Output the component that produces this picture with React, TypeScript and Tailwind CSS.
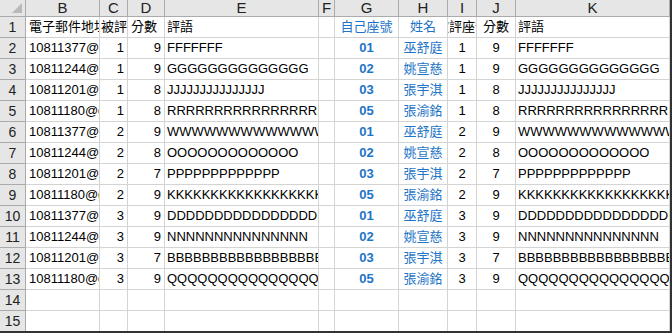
import React from "react";

const COLS = ["B", "C", "D", "E", "F", "G", "H", "I", "J", "K"];

const rows = [
  ["10811377@gmail.com", "1", "9", "FFFFFFF", "01", "巫舒庭", "1", "9", "FFFFFFF"],
  ["10811244@gmail.com", "1", "9", "GGGGGGGGGGGGGG", "02", "姚宣慈", "1", "9", "GGGGGGGGGGGGGG"],
  ["10811201@gmail.com", "1", "8", "JJJJJJJJJJJJJJJ", "03", "張宇淇", "1", "8", "JJJJJJJJJJJJJJJ"],
  ["10811180@gmail.com", "1", "8", "RRRRRRRRRRRRRRRRRRRRRR", "05", "張渝銘", "1", "8", "RRRRRRRRRRRRRRRRRRRRRR"],
  ["10811377@gmail.com", "2", "9", "WWWWWWWWWWWWWWWWWW", "01", "巫舒庭", "2", "9", "WWWWWWWWWWWWWWWWWW"],
  ["10811244@gmail.com", "2", "8", "OOOOOOOOOOOOO", "02", "姚宣慈", "2", "8", "OOOOOOOOOOOOO"],
  ["10811201@gmail.com", "2", "7", "PPPPPPPPPPPPP", "03", "張宇淇", "2", "7", "PPPPPPPPPPPPP"],
  ["10811180@gmail.com", "2", "9", "KKKKKKKKKKKKKKKKKKKK", "05", "張渝銘", "2", "9", "KKKKKKKKKKKKKKKKKKKK"],
  ["10811377@gmail.com", "3", "9", "DDDDDDDDDDDDDDDDDDD", "01", "巫舒庭", "3", "9", "DDDDDDDDDDDDDDDDDDD"],
  ["10811244@gmail.com", "3", "9", "NNNNNNNNNNNNNNN", "02", "姚宣慈", "3", "9", "NNNNNNNNNNNNNNN"],
  ["10811201@gmail.com", "3", "7", "BBBBBBBBBBBBBBBBBBBB", "03", "張宇淇", "3", "7", "BBBBBBBBBBBBBBBBBBBB"],
  ["10811180@gmail.com", "3", "9", "QQQQQQQQQQQQQQQQQQQ", "05", "張渝銘", "3", "9", "QQQQQQQQQQQQQQQQQQQ"],
];

// spreadsheet cell; text colour comes from the sheet or a blue override
const cell = "h-[21px] border-r border-b border-[#d4d4d4] overflow-hidden whitespace-nowrap flex items-center text-[13px]";
const blue = "text-[#1e74c6]";

function DataRow({ n, r }: { n: number; r: string[] }) {
  return (
    <>
      <RowNum n={n} />
      <div className={`${cell} px-[3px]`}>{r[0]}</div>
      <div className={`${cell} justify-end px-[3px]`}>{r[1]}</div>
      <div className={`${cell} justify-end px-[3px]`}>{r[2]}</div>
      <div className={`${cell} px-[2px]`}>{r[3]}</div>
      <div className={cell} />
      <div className={`${cell} justify-center font-bold ${blue}`}>{r[4]}</div>
      <div className={`${cell} justify-center ${blue}`}>{r[5]}</div>
      <div className={`${cell} justify-center`}>{r[6]}</div>
      <div className={`${cell} justify-center`}>{r[7]}</div>
      <div className={`${cell} px-[2px]`}>{r[8]}</div>
    </>
  );
}

function EmptyRow({ n }: { n: number }) {
  return (
    <>
      <RowNum n={n} />
      {COLS.map((c) => (
        <div key={c} className={cell} />
      ))}
    </>
  );
}

function RowNum({ n }: { n: number }) {
  return (
    <div className="h-[21px] bg-[#e6e6e6] border-r border-b border-[#ababab] flex items-center justify-center text-[14px] text-[#222]">
      {n}
    </div>
  );
}

export default function App() {
  return (
    <div
      className="w-[672px] h-[333px] overflow-hidden bg-white text-black border-r-2 border-b-2 border-[#333]"
      style={{ fontFamily: '"Liberation Sans", "Noto Sans CJK TC", sans-serif' }}
    >
      <div className="grid grid-cols-[26px_74px_28px_37px_154px_16px_64px_49px_29px_39px_154px]">
        {/* column headers */}
        <div className="h-[17px] bg-[#e6e6e6] border-r border-b border-[#ababab] relative">
          <div className="absolute right-[3px] bottom-[3px] w-0 h-0 border-l-[10px] border-l-transparent border-b-[10px] border-b-[#b9b9b9]" />
        </div>
        {COLS.map((c) => (
          <div
            key={c}
            className="h-[17px] bg-[#e6e6e6] border-r border-b border-[#ababab] flex items-center justify-center text-[15px] text-[#222]"
          >
            {c}
          </div>
        ))}

        {/* row 1: titles */}
        <RowNum n={1} />
        <div className={`${cell} px-[3px]`}>電子郵件地址</div>
        <div className={`${cell} px-[1px]`}>被評座號</div>
        <div className={`${cell} px-[3px]`}>分數</div>
        <div className={`${cell} px-[2px]`}>評語</div>
        <div className={cell} />
        <div className={`${cell} justify-center ${blue}`}>自己座號</div>
        <div className={`${cell} justify-center ${blue}`}>姓名</div>
        <div className={`${cell} justify-center`}>
          <span className="shrink-0">被評座號</span>
        </div>
        <div className={`${cell} justify-center`}>分數</div>
        <div className={`${cell} px-[2px]`}>評語</div>

        {rows.map((r, i) => (
          <DataRow key={i} n={i + 2} r={r} />
        ))}
        <EmptyRow n={14} />
        <EmptyRow n={15} />
      </div>
    </div>
  );
}
